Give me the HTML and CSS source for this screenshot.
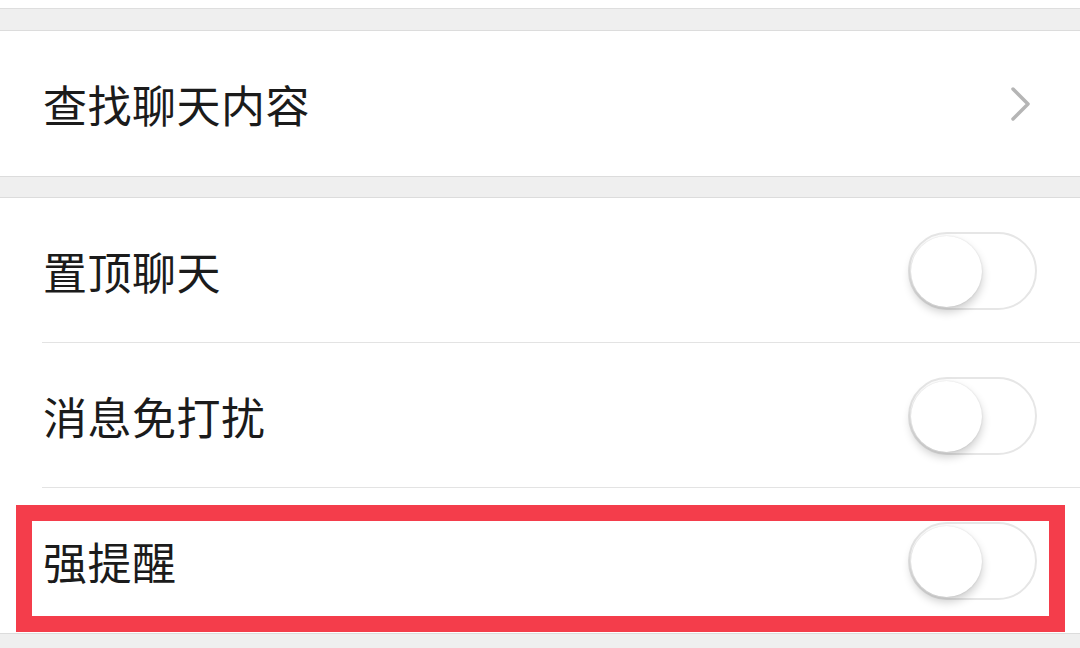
FILE: index.html
```html
<!DOCTYPE html>
<html lang="zh-CN">
<head>
  <meta charset="UTF-8" />
  <meta name="viewport" content="width=device-width, initial-scale=1.0"/>
  <title>聊天信息</title>
  <link rel="stylesheet" href="styles.css">
</head>
<body>
  <div class="topo"></div>

  <div class="grupo">
    <div class="linha">
      <span class="rotulo">查找聊天内容</span>
      <svg class="seta" width="24" height="36" viewBox="0 0 24 36">
        <path d="M4 3 L19 18 L4 33" fill="none" stroke="#b5b5b5" stroke-width="3.5" stroke-linecap="round" stroke-linejoin="round"/>
      </svg>
    </div>
  </div>

  <div class="grupo">
    <div class="linha">
      <span class="rotulo">置顶聊天</span>
      <div class="chave"><div class="bolinha"></div></div>
    </div>
    <div class="linha">
      <span class="rotulo">消息免打扰</span>
      <div class="chave"><div class="bolinha"></div></div>
    </div>
    <div class="linha destaque">
      <span class="rotulo">强提醒</span>
      <div class="chave"><div class="bolinha"></div></div>
      <div class="moldura"></div>
    </div>
  </div>
</body>
</html>
```

FILE: styles.css
```css
body { margin: 0; background: #efefef; font-family: "Noto Sans CJK SC", "Noto Sans", sans-serif; color: #1b1b1b; overflow: hidden; }
.topo { height: 8px; background: #fff; border-bottom: 1px solid #dedede; }
.grupo { background: #fff; border-top: 1px solid #dcdcdc; border-bottom: 1px solid #dcdcdc; margin-top: 21px; }
.grupo + .grupo { margin-top: 20px; }
.linha { position: relative; height: 145px; display: flex; align-items: center; justify-content: space-between; padding: 0 43px 0 43px; }
.linha + .linha::before { content: ""; position: absolute; top: -1px; left: 42px; right: 0; height: 1px; background: #e3e3e3; }
.rotulo { font-size: 44px; letter-spacing: 0.5px; line-height: 1; }
.seta { margin-right: 4px; }
.chave { width: 125px; height: 74px; border: 2px solid #e6e6e6; border-radius: 40px; background: #fff; position: relative; }
.bolinha { position: absolute; left: 1px; top: 2px; width: 71px; height: 71px; border-radius: 50%; background: #fff; box-shadow: 0 5px 10px rgba(0,0,0,0.2), 0 0 2px rgba(0,0,0,0.12); }
.moldura { position: absolute; left: 16px; right: 15px; top: 17px; bottom: 1px; border: 16px solid #f43d4b; }
```
